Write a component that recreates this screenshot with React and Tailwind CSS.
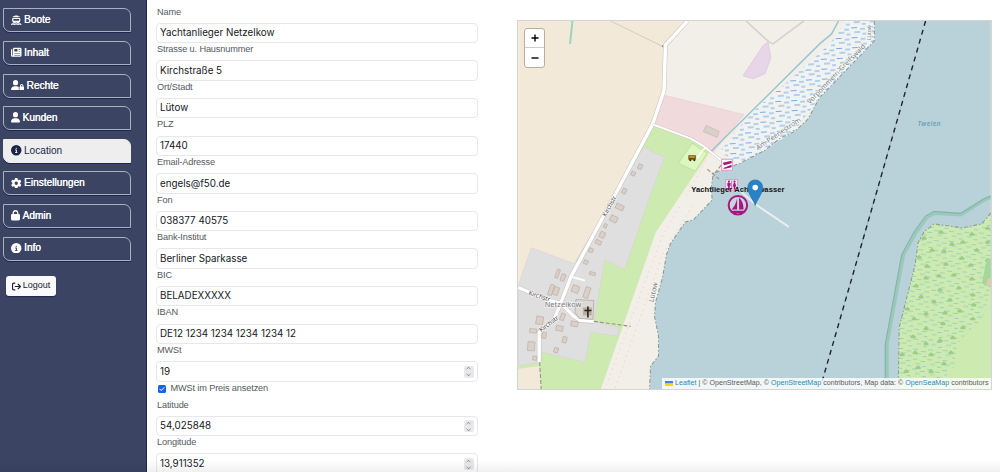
import React from "react";
import {
  FaFerry,
  FaNewspaper,
  FaUserLock,
  FaUser,
  FaCircleInfo,
  FaGear,
  FaLock,
  FaArrowRightFromBracket,
  FaChevronUp,
  FaChevronDown,
  FaCheck,
} from "react-icons/fa6";

const NAV = [
  { label: "Boote", Icon: FaFerry },
  { label: "Inhalt", Icon: FaNewspaper },
  { label: "Rechte", Icon: FaUserLock, wide: true },
  { label: "Kunden", Icon: FaUser, narrow: true },
  { label: "Location", Icon: FaCircleInfo, active: true },
  { label: "Einstellungen", Icon: FaGear },
  { label: "Admin", Icon: FaLock, narrow: true },
  { label: "Info", Icon: FaCircleInfo },
];

const FIELDS = [
  ["Name", "Yachtanlieger Netzelkow"],
  ["Strasse u. Hausnummer", "Kirchstraße 5"],
  ["Ort/Stadt", "Lütow"],
  ["PLZ", "17440"],
  ["Email-Adresse", "engels@f50.de"],
  ["Fon", "038377 40575"],
  ["Bank-Institut", "Berliner Sparkasse"],
  ["BIC", "BELADEXXXXX"],
  ["IBAN", "DE12 1234 1234 1234 1234 12"],
];

function NavItem({ label, Icon, active, wide, narrow }) {
  const tone = active
    ? "bg-[#eeeeef] border-[#eeeeef] text-[#1c2548]"
    : "border-[#aab0c2] text-white [text-shadow:0.35px_0_0_#fff]";
  const size = wide ? "w-[13px]" : narrow ? "w-[9px]" : "w-[10.5px]";
  return (
    <div
      className={`flex h-[24px] items-center gap-[2.5px] rounded-tr-[7px] rounded-bl-[7px] border pb-[1px] pl-[7px] text-[10.1px] shadow-[0_1px_0_#1d2750] ${tone}`}
    >
      <Icon className={`h-[10.5px] shrink-0 ${size}`} />
      <span>{label}</span>
    </div>
  );
}

function Field({ label, value, number }) {
  return (
    <div>
      <div className="h-[17.1px] pl-[1px] text-[9.2px] leading-[13px] tracking-[-0.015em] text-[#55585e]">{label}</div>
      <div
        className="flex h-[20.5px] items-center justify-between rounded-[4px] border border-[#e6e7ed] bg-white pt-[1px] pr-[3px] pl-[3px] font-[Inter] text-[9.8px] text-[#15171c]"
      >
        <span>{value}</span>
        {number && (
          <span className="flex h-[12px] w-[10.5px] flex-col items-center justify-center gap-[1px] rounded-[2px] bg-[#e8e8ea] text-[#85858a]">
            <FaChevronUp size={5} />
            <FaChevronDown size={5} />
          </span>
        )}
      </div>
    </div>
  );
}

const HOUSES = [
  [639.5, 166.5, 4, 5, 25], [632.5, 173.5, 4, 4, 25], [623.5, 191, 4, 5, 25],
  [619, 207, 8, 5, 25], [613, 219, 7, 6, 25], [604.5, 226, 3, 4, 25],
  [601.5, 235, 5, 6, 25], [597.5, 242.5, 6, 4, 25], [590, 250.5, 4, 4, 25],
  [585, 262.5, 4, 4, 25], [591.5, 274, 6, 3, 15], [556.5, 274, 3, 9, 20],
  [562, 278, 4, 7, 20], [550, 290.5, 4, 11, 20], [555, 291.5, 5, 8, 20],
  [574.5, 289.5, 7, 7, 20], [586, 293, 5, 11, 20], [561.5, 317.5, 4, 7, 20],
  [538.5, 321, 7, 8, 10], [573.5, 324.5, 7, 5, 10], [558.5, 329, 7, 5, 10],
  [532, 331.5, 7, 4, 5], [543, 336, 4, 6, 10], [563.5, 340.5, 4, 6, 15],
  [530, 347, 7, 9, 5], [555, 351, 4, 5, 20], [533.5, 359, 4, 4, 5],
];

const TUFTS = [
  [942, 232], [973, 234], [925, 238], [953, 244], [964, 242], [933, 250], [945, 251],
  [978, 250], [920, 257], [963, 258], [947, 264], [972, 265], [928, 266], [940, 276],
  [955, 275], [927, 278], [973, 279], [917, 286], [941, 290], [960, 288], [922, 297],
  [974, 295], [935, 302], [951, 300], [975, 305], [908, 309], [927, 314], [946, 313],
  [961, 311], [915, 319], [974, 319], [944, 324], [927, 329], [964, 328], [914, 337],
  [941, 341], [954, 338], [927, 344], [952, 353], [903, 355], [916, 353], [932, 355],
  [945, 364], [919, 368], [907, 372], [932, 372], [989, 228], [989, 242], [989, 260],
];

const COAST =
  "M875 20V40L850 66L820 97L808 119L795 131L780 138L765 150L740 163L722 170L713 173L711 188L712 200L693 220L685 222L670 244L666 255L662 278L655 303L654 317L658 337L658 357L650 367L649 390";

const ROADS = [
  "M687 20L665 44L663.5 90L652 124L612 199L570 277L560 303L553 320L538 333L538 363",
  "M517 288L548 301L560 304L573 317L579 321L593 322",
];

function MapDrawing() {
  return (
    <svg viewBox="517 20 475 370" className="h-full w-full" fontFamily="'Noto Sans', sans-serif">
      <defs>
        <pattern id="reeds" width="16" height="10" patternUnits="userSpaceOnUse" patternTransform="rotate(-3)">
          <path d="M1 1.5h6M10 3h5M4 6h6M12 8h4" stroke="#76abe3" strokeWidth="1" fill="none" />
        </pattern>
        <pattern id="marsh" width="15" height="10" patternUnits="userSpaceOnUse" patternTransform="rotate(3)">
          <path d="M1 1.5h5M9 3.5h5M4 6h5M11 8.5h4" stroke="#98cdbd" strokeWidth="0.9" fill="none" />
        </pattern>
      </defs>

      <rect x="517" y="20" width="475" height="370" fill="#f2e9d9" />
      <path
        d="M687 20L665 44L664 94L652 124L690 139L713 150L677 200L655 233L600 390H760V200L992 100V20Z"
        fill="#f2efe9"
      />
      <path d={`${COAST}H992V20Z`} fill="#b9d2da" />

      {/* meadow and village */}
      <path d="M652 125L690 139L710 150L677 200L655 233L600 390H517V368L560 300Z" fill="#cdebb0" />
      <path
        d="M643 147L664 157L648 200L624 270L604 260L593 322L618 328L617 337L590 333L584 363L541 353L538 363L517 367V286L530 248L573 264L612 199Z"
        fill="#e0dfdf"
        stroke="#d3d0ce"
        strokeWidth="0.5"
      />
      <path d="M517 370L538 367L540 390H517Z" fill="#f2e9d9" />
      <path d="M665 95L744 114L713 152L695 140L652 124Z" fill="#f0dadb" stroke="#e3c8ca" strokeWidth="0.5" />
      <path d="M692 143L707 153L695 171L678 163Z" fill="#def6c0" stroke="#a9d98a" strokeWidth="0.6" />
      <path d="M706 125L719 131L717 137L703 131Z" fill="#d9d0c9" stroke="#c0b3a8" strokeWidth="0.6" />
      <path d="M743 75L763 45L768 41L771 57L765 73L753 78Z" fill="#e6d6e8" stroke="#d5bfda" strokeWidth="0.6" />
      <path d="M746 20L769 41L773 43L804 20" fill="none" stroke="#d5d1cb" strokeWidth="1.6" />

      {/* reed belt */}
      <path d="M847 20H875V40L820 97L795 130L765 150L740 163L719 152L752 112L790 79L830 43Z" fill="#f1f3f2" />
      <path d="M847 20H875V40L820 97L795 130L765 150L740 163L719 152L752 112L790 79L830 43Z" fill="url(#reeds)" />
      <path d="M839 20L832 33L820 43L710 152" fill="none" stroke="#9ac4d2" strokeWidth="1.5" />
      <path d={COAST} fill="none" stroke="#8d9d95" strokeWidth="1.1" strokeDasharray="4 2 1.5 2" />
      <path d="M679 207L662 236L604 390" fill="none" stroke="#ead8d3" strokeWidth="1.2" strokeDasharray="1.5 4" />
      <path d="M705 161L686 196M692 206L662 255L614 390" fill="none" stroke="#ead8d3" strokeWidth="1.2" strokeDasharray="1.5 4" />

      {/* roads */}
      <path d="M610 20L663 46" stroke="#ccc5ba" strokeWidth="0.8" />
      <circle cx="662.5" cy="45.5" r="1" fill="#777" />
      <path d="M571.5 20L569 43" stroke="#98d6bd" strokeWidth="2" />
      {ROADS.map((d) => (
        <path key={d} d={d} fill="none" stroke="#c9c5c1" strokeWidth="4.6" strokeLinejoin="round" />
      ))}
      {ROADS.map((d) => (
        <path key={d} d={d} fill="none" stroke="#fff" strokeWidth="3.5" strokeLinejoin="round" />
      ))}
      <path d="M570 277L584 281" stroke="#fff" strokeWidth="2" />
      <path d="M652 124L690 138L702 145L721 160" fill="none" stroke="#c9c5c1" strokeWidth="2.8" />
      <path d="M652 124L690 138L702 145L721 160" fill="none" stroke="#fff" strokeWidth="2" />
      <path d="M707 169L719 179M721 165L713 175M538.5 363L540 390M593 322L630 327" fill="none" stroke="#9b9287" strokeWidth="1.1" strokeDasharray="4 2" />
      <path d="M697 158L702 150L706 147" fill="none" stroke="#fff" strokeWidth="1.5" />
      {HOUSES.map(([x, y, w, h, r]) => (
        <rect
          key={`${x}-${y}`}
          x={x - w / 2}
          y={y - h / 2}
          width={w}
          height={h}
          transform={`rotate(${r} ${x} ${y})`}
          fill="#d9d0c9"
          stroke="#bfb0a5"
          strokeWidth="0.7"
        />
      ))}
      <path d="M575 300L593 301L592 320L578 319L574 313Z" fill="#dcd8d3" stroke="#a9a39d" strokeWidth="0.7" />
      <rect x="582" y="308" width="9" height="8" fill="#bdaea4" />
      <path d="M587 307V318M583.5 311H590.5" stroke="#222" strokeWidth="1.6" />

      {/* eastern shore */}
      <path
        d="M992 213L983 224L963 228L935 224L925 232L919 243L916 265L900 328L899 390H992Z"
        fill="#cdebb0"
      />
      <path
        d="M992 213L983 224L963 228L935 224L925 232L919 243L916 265L900 328L899 390H936L955 368L958 345L984 318L992 290Z"
        fill="url(#marsh)"
      />
      {TUFTS.map(([x, y]) => (
        <path key={`${x}-${y}`} d={`M${x - 2.5} ${y + 2}v-2l1.5 -1l1 -1l1 1l1.5 1v2z`} fill="#9ccb8a" />
      ))}
      <path d="M988 260L992 258V288L983 284Z" fill="#a5d69b" />
      <path d="M989 279H992V286H987Z" fill="#e3c9b0" />
      <path
        d="M992 213L983 224L963 228L935 224L925 232L919 243L916 265L900 328L899 390"
        fill="none"
        stroke="#8d9d95"
        strokeWidth="1.1"
        strokeDasharray="4 2 1.5 2"
      />
      <path
        d="M992 197L985 200L962 214.5L935 213L928 217L917 232L904 255L887.5 345L887.5 390"
        fill="none"
        stroke="#9cc8bc"
        strokeWidth="4"
      />
      <path
        d="M992 196L985 199L962 213.5L935 211.5L926.5 216L915.5 231L902.5 255L886 345L886 390"
        fill="none"
        stroke="#80b3a4"
        strokeWidth="1"
      />
      <path d="M926.5 20L875 200L822 384" stroke="#1b252c" strokeWidth="1.4" strokeDasharray="5 4.3" />

      {/* place names */}
      <g fill="#444" stroke="#fff" strokeWidth="1.5" strokeOpacity="0.6" paintOrder="stroke" fontSize="6.2">
        <text transform="translate(605 217) rotate(-61)">Kirchstr</text>
        <text transform="translate(527 295) rotate(19)">Kirchstr</text>
        <text transform="translate(540 333) rotate(-38)">Kirchstr</text>
        <text transform="translate(653 303) rotate(-78)" fill="#777" fontSize="7">Lütow</text>
        <text transform="translate(758 150) rotate(-34)" fill="#7b8478" fontSize="7">Am Peenestrom</text>
        <text transform="translate(810 104) rotate(-46)" fill="#7b8478" fontSize="7">Vorpommern-Greifswald</text>
        <text transform="translate(872 39) rotate(-90)" fill="#7b8478" fontSize="5.2">Lütow</text>
      </g>
      <text x="543.5" y="308" fontSize="7.5" fill="#777" stroke="#fff" strokeWidth="1.5" strokeOpacity="0.6" paintOrder="stroke" textLength="37">
        Netzelkow
      </text>
      <text x="918.5" y="125.5" fontSize="7" fontStyle="italic" fill="#5a8fb0" textLength="23">
        Twelen
      </text>

      {/* harbour */}
      <path d="M728 180L755 204L789 227" fill="none" stroke="#e9eeee" strokeWidth="1.9" />
      <path d="M688 155h7.5v4.5h-7.5z" fill="#6b4a13" />
      <path d="M689 156h5.5v1.5h-5.5z" fill="#dda93a" />
      <circle cx="690" cy="160" r="1" fill="#3c2a0d" />
      <circle cx="694" cy="160" r="1" fill="#3c2a0d" />
      <rect x="721.5" y="159" width="11" height="11" fill="#fff" stroke="#d59bc8" strokeWidth="1" />
      <path d="M722.5 162.5L731.5 160.5V163L724 165ZM722.5 168L731.5 164.5V167L725 168.5Z" fill="#a5177f" />
      <rect x="725.5" y="179.5" width="12" height="11" fill="#f8e8f4" stroke="#d59bc8" strokeWidth="1" />
      <g fill="#a5177f">
        <circle cx="728.8" cy="181.5" r="1.1" />
        <circle cx="734.4" cy="181.5" r="1.1" />
        <path d="M727.2 183h3.2v3.2h-.8v3.5h-1.6v-3.5h-.8zM733.6 183h1.6l1 3.5h-1v3.2h-1.6v-3.2h-1zM731.4 180.5h0.6v9h-0.6z" />
      </g>
      <text
        x="691"
        y="192"
        fontFamily="'Liberation Sans', sans-serif"
        fontWeight="700"
        fontSize="7.6"
        fill="#101010"
        textLength="93.5"
      >
        Yachtlieger Achterwasser
      </text>
      <circle cx="737.8" cy="205.2" r="9.3" fill="#c9d3de" stroke="#a5177f" strokeWidth="2" />
      <path d="M737 198.5V209.5H731.5Q735.5 205.5 737 198.5ZM739 197.5Q743.5 202 743.5 209.5H739ZM730.5 210.7H745L742 213H733.5Z" fill="#a5177f" />
      <path
        d="M755.2 205.5C754.2 200.5 747.7 194 747.7 187.3A7.5 7.5 0 0 1 762.7 187.3C762.7 194 756.2 200.5 755.2 205.5Z"
        fill="#2a81c5"
        stroke="#226fab"
        strokeWidth="0.7"
      />
      <circle cx="755.2" cy="187.5" r="2.8" fill="#fff" />
    </svg>
  );
}

export default function App() {
  return (
    <div className="relative flex h-[472px] w-[1000px] overflow-hidden bg-white font-['Liberation_Sans',sans-serif]">
      <aside className="w-[147px] shrink-0 border-r border-[#1c2650] bg-[#3b4463] pt-[8.4px] pr-[15px] pl-[3px]">
        <nav className="flex flex-col gap-[8.6px]">
          {NAV.map((item) => (
            <NavItem key={item.label} {...item} />
          ))}
        </nav>
        <button className="mt-[15.5px] ml-[3px] flex h-[20px] w-[50px] items-center justify-center gap-[2px] rounded-[3px] bg-[#fafafc] text-[9px] text-[#20222c] shadow-[0_1px_1px_#1d2750]">
          <FaArrowRightFromBracket className="h-[9px] w-[9px] shrink-0" />
          Logout
        </button>
      </aside>

      <main className="w-[323px] shrink-0 pt-[5.7px]">
        <div className="ml-[9px] w-[322px]">
          {FIELDS.map(([label, value]) => (
            <Field key={label} label={label} value={value} />
          ))}
          <Field label="MWSt" value="19" number />
          <div className="flex h-[17px] items-center gap-[4.5px] pb-[3px] pl-[2px] text-[9.2px] tracking-[-0.015em] text-[#55585e]">
            <span className="flex h-[8px] w-[8px] items-center justify-center rounded-[1.5px] bg-[#1465e6] text-white">
              <FaCheck size={6} />
            </span>
            MWSt im Preis ansetzen
          </div>
          <Field label="Latitude" value="54,025848" number />
          <Field label="Longitude" value="13,911352" number />
        </div>
      </main>

      <section className="relative mt-[20px] ml-[47px] h-[370px] w-[475px] shrink-0 overflow-hidden border border-[#d4d4d2]">
        <MapDrawing />
        <div className="absolute top-[7px] left-[6px] flex h-[40px] w-[21px] flex-col rounded-[3px] border border-[#b5afa6] bg-white text-black">
          <span className="flex h-[19px] items-center justify-center border-b border-[#ccc]">
            <svg viewBox="0 0 8 8" className="h-[8px] w-[8px]" stroke="currentColor" strokeWidth="1.4">
              <path d="M4 0.5V7.5M0.5 4H7.5" />
            </svg>
          </span>
          <span className="flex h-[19px] items-center justify-center">
            <svg viewBox="0 0 8 8" className="h-[8px] w-[8px]" stroke="currentColor" strokeWidth="1.4">
              <path d="M0.5 4H7.5" />
            </svg>
          </span>
        </div>
        <div className="absolute right-0 bottom-0 flex h-[11px] w-[329px] items-center bg-white/80 pl-[3px] text-[7.1px] tracking-[0.002em] whitespace-nowrap text-[#5a5a5a]">
          <svg viewBox="0 0 8 5" className="mr-[2px] h-[5px] w-[8px] shrink-0">
            <path fill="#4c7be1" d="M0 0h8v2.5H0z" />
            <path fill="#ffd500" d="M0 2.5h8V5H0z" />
          </svg>
          <span className="whitespace-pre">
            <span className="text-[#2a8ab5]">Leaflet</span> | © OpenStreetMap, ©{" "}
            <span className="text-[#2a8ab5]">OpenStreetMap</span> contributors, Map data: ©{" "}
            <span className="text-[#2a8ab5]">OpenSeaMap</span> contributors
          </span>
        </div>
      </section>

      <div className="pointer-events-none absolute bottom-0 left-0 h-[12px] w-full bg-linear-to-b from-black/0 to-black/6" />
    </div>
  );
}
